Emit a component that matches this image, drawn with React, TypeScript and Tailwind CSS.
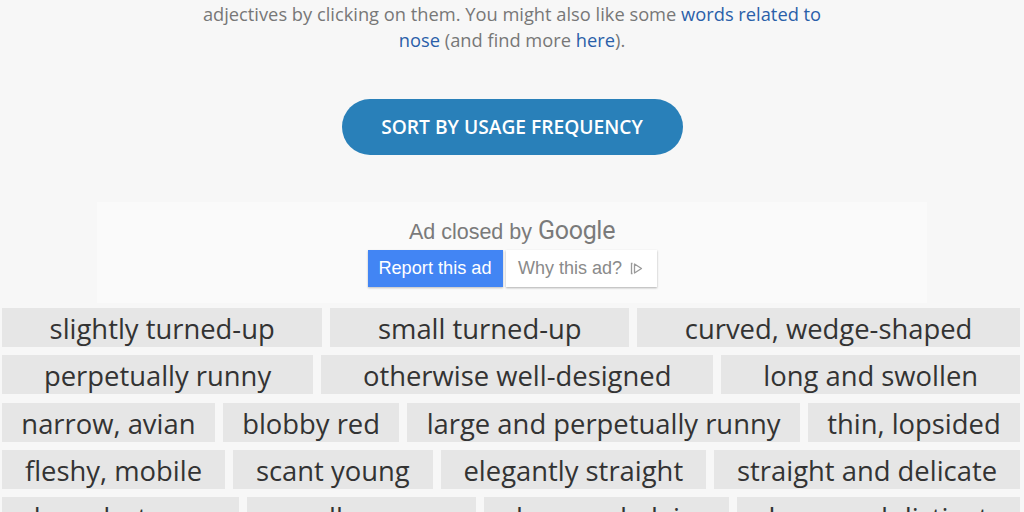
import React from "react";

const rows: string[][] = [
  ["slightly turned-up", "small turned-up", "curved, wedge-shaped"],
  ["perpetually runny", "otherwise well-designed", "long and swollen"],
  ["narrow, avian", "blobby red", "large and perpetually runny", "thin, lopsided"],
  ["fleshy, mobile", "scant young", "elegantly straight", "straight and delicate"],
  ["broad, strong", "swollen, gray", "long and plain", "large and distinct"],
];

function AdChoices() {
  return (
    <svg width="14" height="15" viewBox="0 0 14 15" className="ml-[8px]" fill="none" stroke="#9a9a9a" strokeWidth="1.3">
      <path d="M2.5 2.5 L1.5 2.5 L1.5 12.5 L2.5 12.5" />
      <path d="M4.5 3 L4.5 12 L11.5 7.5 Z" strokeLinejoin="round" />
    </svg>
  );
}

export default function App() {
  return (
    <div className="w-[1024px] h-[512px] overflow-hidden bg-[#f7f7f7]">
      <div
        className="pt-[1px] text-center text-[18.3px] leading-[26px] text-[#777777]"
        style={{ fontFamily: '"Open Sans", sans-serif' }}
      >
        <p>
          adjectives by clicking on them. You might also like some{" "}
          <span className="text-[#2a5fa9]">words related to</span>
          <br />
          <span className="text-[#2a5fa9]">nose</span> (and find more{" "}
          <span className="text-[#2a5fa9]">here</span>).
        </p>
      </div>

      <div className="mt-[46px] flex justify-center">
        <button
          className="w-[341px] h-[56px] rounded-full bg-[#2980b9] text-white text-[19.2px] font-semibold"
          style={{ fontFamily: '"Open Sans", sans-serif' }}
        >
          SORT BY USAGE FREQUENCY
        </button>
      </div>

      <div
        className="mt-[47px] mx-auto w-[830px] h-[101px] bg-[#fafafa] pt-[17px] flex flex-col items-center"
        style={{ fontFamily: '"Liberation Sans", Arial, sans-serif' }}
      >
        <div className="h-[24px] flex items-end text-[#7a7a7a] leading-none">
          <span className="text-[21.5px]">Ad closed by</span>
          <span className="ml-[6px] text-[25px] tracking-[-0.3px]" style={{ fontFamily: 'Roboto, "Liberation Sans", sans-serif' }}>
            Google
          </span>
        </div>
        <div className="mt-[7px] flex gap-[3px]">
          <div className="w-[135px] h-[37px] bg-[#4285f4] text-white text-[18.2px] flex items-center justify-center shadow-[0_1px_2px_rgba(0,0,0,0.25)]">
            Report this ad
          </div>
          <div className="w-[151px] h-[37px] bg-white text-[#8a8a8a] text-[18px] flex items-center justify-center shadow-[0_1px_2px_rgba(0,0,0,0.3)]">
            Why this ad?
            <AdChoices />
          </div>
        </div>
      </div>

      <div
        className="mt-[5px] pl-[2px] pr-[4px] flex flex-col gap-[8.25px]"
        style={{ fontFamily: '"Open Sans", sans-serif' }}
      >
        {rows.map((row, i) => (
          <div key={i} className="flex gap-[8px]">
            {row.map((t) => (
              <div
                key={t}
                className="flex-auto h-[39px] pt-[2px] px-[14px] bg-[#e6e6e6] text-[#333333] text-[27.4px] leading-[37px] text-center whitespace-nowrap"
              >
                {t}
              </div>
            ))}
          </div>
        ))}
      </div>
    </div>
  );
}
